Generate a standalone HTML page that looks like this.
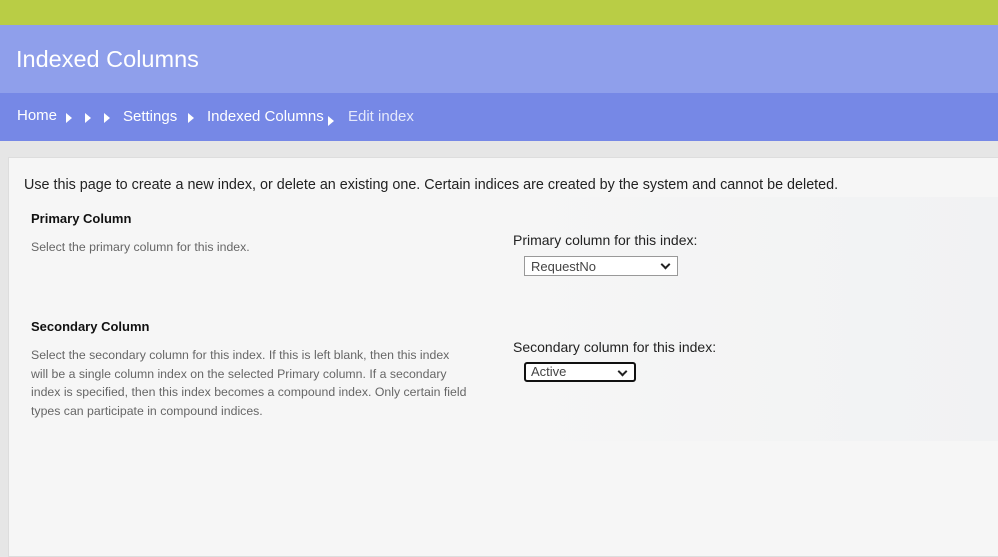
<!DOCTYPE html>
<html><head><style>
*{margin:0;padding:0;box-sizing:border-box}
body{width:998px;height:543px;overflow:hidden;background:#e6e6e6;font-family:"Liberation Sans",sans-serif;position:relative}
.g{position:absolute;left:0;top:0;width:998px;height:25px;background:#b9cd45}
.t{position:absolute;left:0;top:25px;width:998px;height:68px;background:#8f9feb;color:#fff;font-size:23.5px;padding:21px 0 0 16px}
.b{position:absolute;left:0;top:93px;width:998px;height:48px;background:#7688e6;color:#fff;font-size:15px}
.b span{position:absolute;top:15px}
.tri{position:absolute;width:0;height:0;border-top:5px solid transparent;border-bottom:5px solid transparent;border-left:6px solid #fff}
.p{position:absolute;left:8px;top:157px;width:992px;height:400px;background:#f6f6f6;border:1px solid #ddd}
.r{position:absolute;left:500px;top:197px;width:498px;height:244px;background:linear-gradient(90deg,#f6f6f6,#f1f2f3)}
.x{position:absolute;font-size:14px;color:#222}
.h{position:absolute;font-size:13px;font-weight:bold;color:#111}
.d{position:absolute;font-size:12.3px;color:#666;line-height:18.5px;white-space:nowrap}
.s{position:absolute;background:#fff;border:1px solid #999;font-size:13px;color:#444;padding:2px 6px;height:20px}
.s::after{content:"";position:absolute;right:8px;top:4px;width:5px;height:5px;border-right:2px solid #222;border-bottom:2px solid #222;transform:rotate(45deg)}
</style></head><body>
<div class="g"></div>
<div class="t">Indexed Columns</div>
<div class="b">
<span style="left:17px;top:14px">Home</span>
<div class="tri" style="left:66px;top:20px"></div>
<div class="tri" style="left:85px;top:20px"></div>
<div class="tri" style="left:104px;top:20px"></div>
<span style="left:123px">Settings</span>
<div class="tri" style="left:188px;top:20px"></div>
<span style="left:207px">Indexed Columns</span>
<div class="tri" style="left:328px;top:23px"></div>
<span style="left:348px;color:#e4e8fb">Edit index</span>
</div>
<div class="p"></div>
<div class="r"></div>
<div class="x" style="left:24px;top:177px;font-size:14.35px">Use this page to create a new index, or delete an existing one. Certain indices are created by the system and cannot be deleted.</div>
<div class="h" style="left:31px;top:211px">Primary Column</div>
<div class="d" style="left:31px;top:238px">Select the primary column for this index.</div>
<div class="x" style="left:513px;top:232px">Primary column for this index:</div>
<div class="s" style="left:524px;top:256px;width:154px">RequestNo</div>
<div class="h" style="left:31px;top:319px">Secondary Column</div>
<div class="d" style="left:31px;top:346px">Select the secondary column for this index. If this is left blank, then this index<br>will be a single column index on the selected Primary column. If a secondary<br>index is specified, then this index becomes a compound index. Only certain field<br>types can participate in compound indices.</div>
<div class="x" style="left:513px;top:339px">Secondary column for this index:</div>
<div class="s" style="left:524px;top:362px;width:112px;border:2px solid #111;border-radius:3px;padding:0 5px">Active</div>
</body></html>
